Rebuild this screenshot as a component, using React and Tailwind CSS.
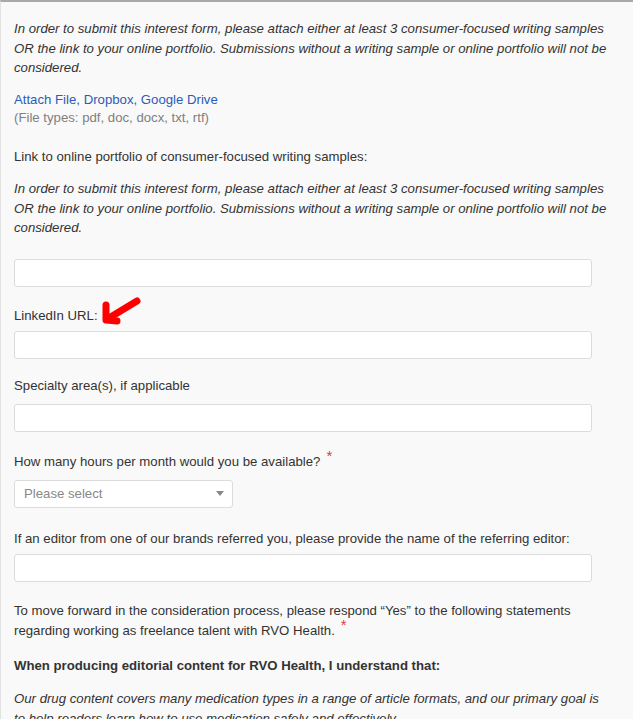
import React from "react";

function Req() {
    return <span className="text-[#e03a3e] text-[15px] leading-[10px] ml-[6px] relative -top-[5px]">*</span>;
}

function TextBox({ className = "" }) {
    return (
        <input
            type="text"
            className={`block w-[578px] h-[28px] bg-white border border-[#dcdcdc] rounded-[3px] ${className}`}
        />
    );
}

const notice =
    "In order to submit this interest form, please attach either at least 3 consumer-focused writing samples OR the link to your online portfolio. Submissions without a writing sample or online portfolio will not be considered.";

export default function App() {
    return (
        <div className="min-h-[719px] bg-[#f9f9f9] border-t-2 border-t-[#a9a9a9] border-l border-l-[#e2e2e2] font-['Liberation_Sans',Arial,sans-serif] text-[13.2px] leading-[19.6px] text-[#333] overflow-hidden">
            <div className="pl-[13px] pr-[20px] pt-[17px] relative">
                <p className="italic w-[600px]">{notice}</p>

                <div className="mt-[12px]">
                    <a href="#" className="text-[#2b5cb8]">Attach File</a>
                    <span className="text-[#2b5cb8]">, </span>
                    <a href="#" className="text-[#2b5cb8]">Dropbox</a>
                    <span className="text-[#2b5cb8]">, </span>
                    <a href="#" className="text-[#2b5cb8]">Google Drive</a>
                </div>
                <div className="text-[13.2px] leading-[18px] text-[#808080]">(File types: pdf, doc, docx, txt, rtf)</div>

                <p className="mt-[20px]">Link to online portfolio of consumer-focused writing samples:</p>
                <p className="italic w-[600px] mt-[12px]">{notice}</p>
                <TextBox className="mt-[21px]" />

                <p className="mt-[19px]">LinkedIn URL:</p>
                <TextBox className="mt-[6px]" />

                <svg className="absolute left-[98px] top-[291px]" width="44" height="34" viewBox="0 0 44 34" fill="none">
                    <path d="M38 8 L10 25" stroke="#ff0000" strokeWidth="7" strokeLinecap="round" />
                    <path d="M7 12 L7 27 L18 28" stroke="#ff0000" strokeWidth="7" strokeLinecap="round" strokeLinejoin="round" />
                </svg>

                <p className="mt-[17px]">Specialty area(s), if applicable</p>
                <TextBox className="mt-[8px]" />

                <p className="mt-[20px]">
                    How many hours per month would you be available?<Req />
                </p>
                <div className="mt-[8px] w-[219px] h-[28px] bg-white border border-[#dcdcdc] rounded-[3px] flex items-center justify-between pl-[9px] pr-[8px]">
                    <span className="text-[#888]">Please select</span>
                    <span className="w-0 h-0 border-l-[4px] border-r-[4px] border-t-[5px] border-l-transparent border-r-transparent border-t-[#888]"></span>
                </div>

                <p className="mt-[21px]">If an editor from one of our brands referred you, please provide the name of the referring editor:</p>
                <TextBox className="mt-[6px]" />

                <p className="mt-[19px] w-[570px]">
                    To move forward in the consideration process, please respond “Yes” to the following statements regarding working as freelance talent with RVO Health.<Req />
                </p>

                <p className="mt-[16px] font-bold">When producing editorial content for RVO Health, I understand that:</p>

                <p className="mt-[13px] italic w-[596px]">
                    Our drug content covers many medication types in a range of article formats, and our primary goal is to help readers learn how to use medication safely and effectively.
                </p>
            </div>
        </div>
    );
}
